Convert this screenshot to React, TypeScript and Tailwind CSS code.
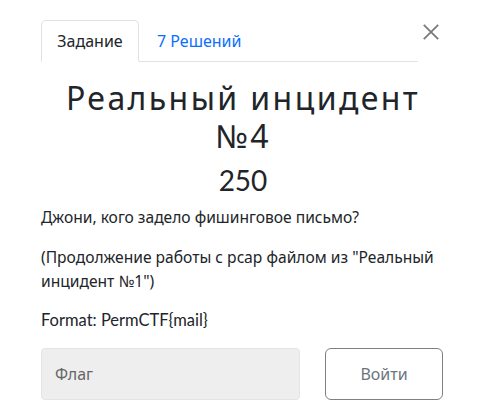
import React from "react";

export default function App() {
  return (
    <div className="relative w-[486px] h-[419px] bg-white text-[#212529] font-['Lato',sans-serif]">
      <button className="absolute left-[423px] top-[24px] w-[16px] h-[16px] flex items-center justify-center text-[#7a7a7a]">
        <svg width="16" height="16" viewBox="0 0 16 16" fill="none" stroke="currentColor" strokeWidth="1.8">
          <path d="M0.8 0.8L15.2 15.2M15.2 0.8L0.8 15.2" />
        </svg>
      </button>
      <div className="pl-[41px] pt-[20px] w-[418px]">
        <div className="flex border-b border-[#dee2e6] h-[42px]">
          <div className="w-[98px] justify-center border border-[#dee2e6] border-b-white rounded-t-[5px] -mb-px flex items-center text-[16px] text-[#212529] bg-white font-['Noto_Sans']">
            Задание
          </div>
          <div className="pl-[18px] flex items-center text-[16px] text-[#0d6efd] font-['Noto_Sans']">
            7 Решений
          </div>
        </div>
      </div>
      <div className="px-[41px]">
        <h1 className="text-center text-[32px] leading-[38px] tracking-[2.4px] mt-[17px] font-normal font-['Noto_Sans']">
          Реальный инцидент
          <br />
          №4
        </h1>
        <div className="text-center text-[28px] leading-[34px] mt-[8px]">250</div>
        <p className="text-[15.6px] leading-[24px] mt-[8px] font-['Noto_Sans']">Джони, кого задело фишинговое письмо?</p>
        <p className="text-[15.6px] leading-[24px] mt-[16px] font-['Noto_Sans']">
          (Продолжение работы с pcap файлом из "Реальный инцидент №1")
        </p>
        <p className="text-[16.5px] leading-[24px] mt-[15px]">Format: PermCTF{"{"}mail{"}"}</p>
        <div className="flex mt-[16px] gap-[25px]">
          <div className="w-[259px] h-[52px] bg-[#eeeeee] rounded-[4px] border border-[#e4e4e4] flex items-center pl-[13px] text-[16px] text-[#666] font-['Noto_Sans']">
            Флаг
          </div>
          <div className="w-[118px] h-[52px] rounded-[6px] border border-[#808080] flex items-center justify-center text-[16px] text-[#6c757d] font-['Noto_Sans']">
            Войти
          </div>
        </div>
      </div>
    </div>
  );
}
